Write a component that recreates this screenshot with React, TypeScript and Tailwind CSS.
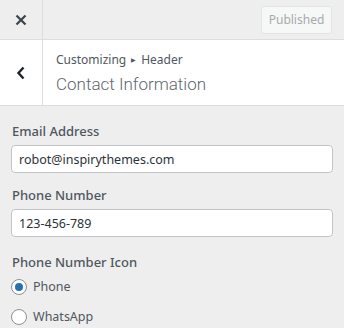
import { useState } from 'react'

const font = { fontFamily: '"Noto Sans", "Open Sans", sans-serif' }
const titleFont = { fontFamily: 'Roboto, "Noto Sans", sans-serif' }

const Radio = ({ label, checked, onPick }: { label: string; checked: boolean; onPick: () => void }) => (
  <label className="flex items-center h-[20px] gap-[6px] cursor-pointer" onClick={onPick}>
    <span className="w-[16px] h-[16px] rounded-full border border-[#8c8f94] bg-white flex items-center justify-center shrink-0">
      {checked && <span className="w-[8px] h-[8px] rounded-full bg-[#2271b1]" />}
    </span>
    <span className="text-[12.5px] text-[#50575e]">{label}</span>
  </label>
)

export default function App() {
  const [icon, setIcon] = useState('phone')

  return (
    <div className="w-[344px] h-[328px] bg-[#eeeeee] overflow-hidden" style={font}>
      {/* top bar */}
      <div className="flex h-[40px] border-b border-[#dddddd]">
        <div className="w-[43px] border-r border-[#dddddd] flex items-center justify-center">
          <svg width="12" height="12" viewBox="0 0 12 12">
            <path d="M1.5 1.5 L10.5 10.5 M10.5 1.5 L1.5 10.5" stroke="#3c434a" strokeWidth="2.2" />
          </svg>
        </div>
        <div className="flex-1 flex items-center justify-end pr-[12px]">
          <button className="h-[28px] w-[71px] rounded-[3px] border border-[#e2e4e7] bg-[#f6f7f7] text-[12px] text-[#a7aaad]">
            Published
          </button>
        </div>
      </div>

      {/* section header */}
      <div className="flex h-[66px] bg-white border-b border-[#dddddd]">
        <div className="w-[43px] border-r border-[#dddddd] flex items-center justify-center">
          <svg width="10" height="14" viewBox="0 0 10 14">
            <path d="M7.5 1.5 L2.5 7 L7.5 12.5" fill="none" stroke="#1d2327" strokeWidth="2.4" />
          </svg>
        </div>
        <div className="flex-1 pl-[13px] pt-[10px] text-[#50575e]">
          <div className="text-[12px] leading-[20px] flex items-center">
            Customizing
            <span className="text-[6px] mx-[5px]">▶</span>
            Header
          </div>
          <div className="text-[17px] leading-[28px] font-light text-[#60676e]" style={titleFont}>
            Contact Information
          </div>
        </div>
      </div>

      {/* controls */}
      <div className="px-[11px] pt-[15px] text-[#50575e]">
        <div className="text-[13px] leading-[20px] font-medium mb-[4px] pl-[1px]">Email Address</div>
        <input
          className="w-full h-[28px] rounded-[4px] border border-[#c3c4c7] bg-white px-[7px] text-[12.5px] text-[#2c3338] outline-none"
          defaultValue="robot@inspirythemes.com"
        />
        <div className="text-[13px] leading-[20px] font-medium mt-[12px] mb-[4px] pl-[1px]">Phone Number</div>
        <input
          className="w-full h-[28px] rounded-[4px] border border-[#c3c4c7] bg-white px-[7px] text-[12.5px] text-[#2c3338] outline-none"
          defaultValue="123-456-789"
        />
        <div className="text-[13px] leading-[20px] font-medium mt-[15px] mb-[5px] pl-[1px]">Phone Number Icon</div>
        <div className="flex flex-col gap-[10px]">
          <Radio label="Phone" checked={icon === 'phone'} onPick={() => setIcon('phone')} />
          <Radio label="WhatsApp" checked={icon === 'whatsapp'} onPick={() => setIcon('whatsapp')} />
        </div>
      </div>
    </div>
  )
}
